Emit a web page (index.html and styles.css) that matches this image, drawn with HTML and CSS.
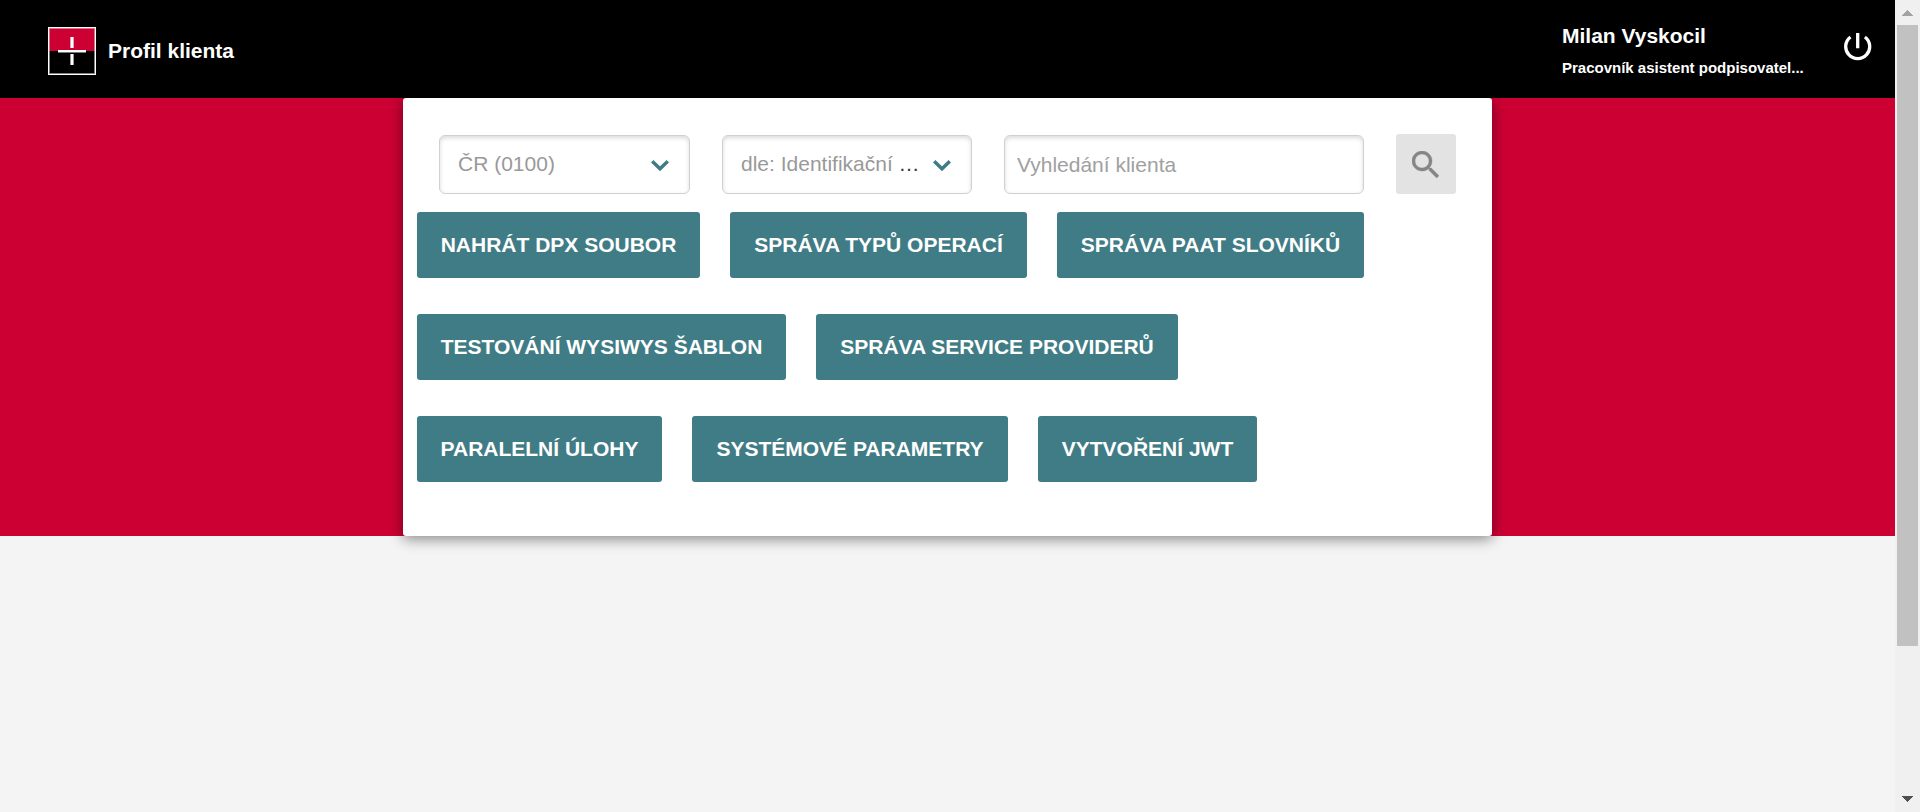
FILE: index.html
```html
<!DOCTYPE html>
<html lang="cs">
<head>
<meta charset="utf-8">
<title>Profil klienta</title>
<link rel="stylesheet" href="styles.css">
</head>
<body>
<div class="page">
  <header class="header">
    <div class="brand">
      <svg class="logo" viewBox="0 0 48 48" shape-rendering="crispEdges">
        <rect width="48" height="48" fill="#fff"/>
        <rect x="1" y="1" width="46" height="46" fill="#808080"/>
        <rect x="1" y="1" width="46" height="23" fill="#e3708c"/>
        <rect x="2" y="2" width="44" height="22" fill="#cc0033"/>
        <rect x="2" y="24" width="44" height="22" fill="#000"/>
        <rect x="10" y="23" width="28" height="2" fill="#fff"/>
        <rect x="10" y="25" width="28" height="1" fill="#777"/>
        <rect x="22" y="10" width="1" height="11" fill="#e3a0b0"/>
        <rect x="25" y="10" width="1" height="11" fill="#e3a0b0"/>
        <rect x="23" y="10" width="2" height="11" fill="#fff"/>
        <rect x="22" y="27" width="4" height="11" fill="#999"/>
        <rect x="23" y="27" width="2" height="11" fill="#fff"/>
      </svg>
      <span class="title">Profil klienta</span>
    </div>
    <div class="account">
      <div class="user">
        <span class="user-name">Milan Vyskocil</span>
        <span class="user-role">Pracovník asistent podpisovatel...</span>
      </div>
      <svg class="power" viewBox="0 0 28 28" fill="none" stroke="#fff" stroke-width="3.300">
        <path d="M13.700 0V15.200M6.500 4A12 12 0 1 0 20.900 4"/>
      </svg>
    </div>
  </header>
  <main class="hero">
    <section class="card">
      <div class="search-row">
        <div class="field select country"><span class="value">ČR (0100)</span>
          <svg class="chevron" viewBox="0 0 18 11"><path d="M1.200 1.300L9 8.800L16.800 1.300" fill="none" stroke="#407c85" stroke-width="3.500"/></svg></div>
        <div class="field select criterion"><span class="value">dle: Identifikační <span class="dots">…</span></span>
          <svg class="chevron" viewBox="0 0 18 11"><path d="M1.200 1.300L9 8.800L16.800 1.300" fill="none" stroke="#407c85" stroke-width="3.500"/></svg></div>
        <input class="field query" type="text" placeholder="Vyhledání klienta">
        <button class="search-button" aria-label="Hledat">
          <svg class="search-icon" viewBox="3 3 17.500 17.500"><path fill="#858585" stroke="#858585" stroke-width=".25" d="M15.500 14h-.79l-.28-.27C15.410 12.590 16 11.110 16 9.500 16 5.910 13.090 3 9.500 3S3 5.910 3 9.500 5.910 16 9.500 16c1.610 0 3.090-.59 4.230-1.570l.27.28v.79l5 4.990L20.490 19l-4.990-5zm-6 0C7.010 14 5 11.990 5 9.500S7.010 5 9.500 5 14 7.010 14 9.500 11.990 14 9.500 14z"/></svg>
        </button>
      </div>
      <div class="actions">
        <div class="action-row"><button class="action w283">NAHRÁT DPX SOUBOR</button><button class="action w297">SPRÁVA TYPŮ OPERACÍ</button><button class="action w307">SPRÁVA PAAT SLOVNÍKŮ</button></div>
        <div class="action-row"><button class="action w369">TESTOVÁNÍ WYSIWYS ŠABLON</button><button class="action w362">SPRÁVA SERVICE PROVIDERŮ</button></div>
        <div class="action-row"><button class="action w245">PARALELNÍ ÚLOHY</button><button class="action w316">SYSTÉMOVÉ PARAMETRY</button><button class="action w219">VYTVOŘENÍ JWT</button></div>
      </div>
    </section>
  </main>
</div>
<div class="scrollbar">
  <svg class="arrow-up" viewBox="0 0 11 6" shape-rendering="crispEdges"><path d="M0 6L5.500 0L11 6Z" fill="#a3a3a3"/></svg>
  <div class="thumb"></div>
  <svg class="arrow-down" viewBox="0 0 11 6" shape-rendering="crispEdges"><path d="M0 0L5.500 6L11 0Z" fill="#505050"/></svg>
</div>
</body>
</html>
```
FILE: styles.css
```css
* { box-sizing: border-box; }
body { margin: 0; height: 812px; overflow: hidden; display: flex; background: #f4f4f4; font-family: "Liberation Sans", Arial, sans-serif; font-size: 21px; }
button, input { font: inherit; }
svg { display: block; flex: none; }
.page { width: 1895px; overflow: hidden; }
.header { position: relative; z-index: 1; height: 98px; background: #000; color: #fff; font-weight: bold; display: flex; justify-content: space-between; padding: 0 23px 0 48px; }
.brand { display: flex; align-items: center; gap: 12px; padding-top: 4px; }
.logo { width: 48px; height: 48px; }
.title { line-height: 24px; }
.account { display: flex; align-items: flex-start; }
.user { width: 282px; padding-top: 24px; display: flex; flex-direction: column; gap: 11px; }
.user-name { line-height: 24px; }
.user-role { font-size: 15px; line-height: 18px; white-space: nowrap; }
.power { width: 28px; height: 28px; margin-top: 33px; }
.hero { height: 438px; background: #cc0033; padding-left: 403px; }
.card { width: 1089px; height: 438px; background: #fff; border-radius: 3px; box-shadow: 0 3px 14px rgba(0, 0, 0, .45); }
.search-row { display: flex; align-items: flex-end; gap: 32px; padding: 36px 36px 0; }
.field { height: 59px; border: 1px solid #d0d0d0; border-radius: 6px; background: #fff; box-shadow: inset 0 2px 4px rgba(0, 0, 0, .15); color: #999; }
.select { display: flex; align-items: center; justify-content: space-between; padding: 0 20px 1px 18px; }
.country { width: 251px; }
.criterion { width: 250px; }
.value { line-height: 24px; white-space: nowrap; }
.dots { color: #333; }
.chevron { width: 18px; height: 11px; margin-top: 3px; }
.query { width: 360px; padding: 0 12px; outline: none; }
.query::placeholder { color: #a0a0a0; opacity: 1; }
.search-button { width: 60px; height: 60px; border: 0; border-radius: 3px; background: #e3e3e3; padding: 17px 0 0 16px; display: flex; align-items: flex-start; }
.search-icon { width: 27px; height: 27px; }
.actions { display: flex; flex-direction: column; gap: 36px; padding: 18px 0 0 14px; }
.action-row { display: flex; gap: 30px; }
.action { height: 66px; padding: 0; border: 0; border-radius: 3px; background: #407c85; color: #fff; font-weight: bold; white-space: nowrap; }
.w283 { width: 283px; }
.w297 { width: 297px; }
.w307 { width: 307px; }
.w369 { width: 369px; }
.w362 { width: 362px; }
.w245 { width: 245px; }
.w316 { width: 316px; }
.w219 { width: 219px; }
.scrollbar { width: 25px; background: #f0f0f0; display: flex; flex-direction: column; align-items: center; padding: 10px 1px 10px 0; }
.thumb { width: 21px; height: 621px; margin-top: 9px; background: #c1c1c1; }
.arrow-up, .arrow-down { width: 11px; height: 6px; }
.arrow-down { margin-top: auto; }
```
